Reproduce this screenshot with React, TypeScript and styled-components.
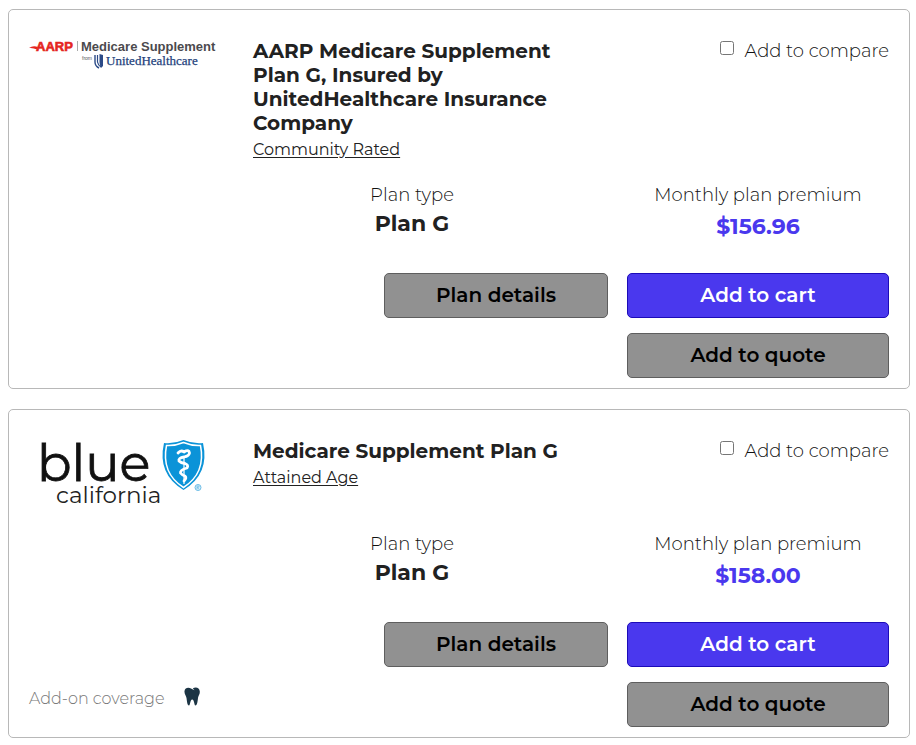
import React from "react";
import styled, { createGlobalStyle } from "styled-components";

const GlobalStyle = createGlobalStyle`
  *, *::before, *::after { box-sizing: border-box; }
  body {
    margin: 0;
    background: #fff;
    color: #212121;
    font-family: Montserrat, Inter, "Open Sans", sans-serif;
    font-size: 18px;
    line-height: 24px;
  }
`;

const PlanList = styled.main`
  display: flex;
  flex-direction: column;
  gap: 20px;
  padding: 9px 6px 7px 8px;
`;

const Card = styled.article`
  display: flex;
  flex-direction: column;
  padding: 29px 20px 10px;
  border: 1px solid #b8b8b8;
  border-radius: 5px;
`;

const Header = styled.header`
  display: grid;
  grid-template-columns: 188px minmax(0, 320px) 1fr;
  align-items: start;
  column-gap: 36px;
  min-height: 72px;
`;

const Title = styled.h2`
  margin: 0 0 3px;
  font-size: 20px;
  font-weight: 700;
  line-height: 24px;
`;

const RatingLink = styled.a`
  display: block;
  width: fit-content;
  color: inherit;
  font-size: 16px;
  text-underline-offset: 2px;
`;

const Compare = styled.label`
  display: flex;
  justify-content: flex-end;
  gap: 11px;
  color: #111;
  font-weight: 300;
  white-space: nowrap;
`;

const Checkbox = styled.input`
  width: 14px;
  height: 14px;
  margin: 2px 0 0;
`;

const Facts = styled.dl`
  display: grid;
  grid-template-columns: 1fr 262px;
  column-gap: 19px;
  margin: 21px 0 0 187px;
  min-height: 90px;
  text-align: center;
`;

const FactLabel = styled.dt`
  color: #111;
  font-weight: 300;
`;

const FactValue = styled.dd<{ $price?: boolean }>`
  margin: ${(p) => (p.$price ? 8 : 5)}px 0 0;
  color: ${(p) => (p.$price ? "#4a38ee" : "inherit")};
  font-size: 22px;
  font-weight: 700;
`;

const Footer = styled.footer`
  display: grid;
  grid-template-columns: 1fr 224px 262px;
  column-gap: 19px;
  align-items: start;
`;

const AddOn = styled.div`
  display: flex;
  align-self: end;
  gap: 18px;
  margin-bottom: 16px;
  color: #777;
  font-size: 16px;
  font-weight: 300;
`;

const Actions = styled.div`
  display: grid;
  gap: 15px;
  grid-column: 3;
`;

const Button = styled.button<{ $primary?: boolean }>`
  height: 45px;
  padding: 0 12px 2px;
  border: 1px solid ${(p) => (p.$primary ? "#1c0bb8" : "#5e5e5e")};
  border-radius: 5px;
  background: ${(p) => (p.$primary ? "#4a38ee" : "#919191")};
  color: ${(p) => (p.$primary ? "#fff" : "#000")};
  font-family: inherit;
  font-size: 20px;
  font-weight: 600;
  cursor: pointer;
`;

const DetailsButton = styled(Button)`
  grid-column: 2;
`;

const LogoArt = styled.svg`
  display: block;
  width: 188px;
  height: 72px;
  overflow: visible;
`;

const ToothArt = styled.svg`
  display: block;
  width: 18px;
  height: 19px;
`;

const AarpLogo = () => (
  <LogoArt viewBox="0 0 188 72" role="img" aria-label="AARP Medicare Supplement from UnitedHealthcare">
    <path d="M0 9 Q4 6 9 8 L8 10.500 Q4 8.500 0 9Z" fill="#e52520" />
    <text x="7" y="12" fontFamily="Liberation Sans" fontSize="13" fontWeight="700" fill="#e52520" stroke="#e52520" strokeWidth=".6">AARP</text>
    <path d="M48.500 2V12" stroke="#aaa" strokeWidth="1" />
    <text x="52" y="12" fontFamily="Liberation Sans" fontSize="13" fontWeight="700" fill="#4b4a4d">Medicare Supplement</text>
    <text x="53" y="21" fontFamily="Liberation Sans" fontSize="5" fill="#555">from</text>
    <path d="M66 16V23Q66 27 70 29" fill="none" stroke="#2b4a87" strokeWidth="1.4" />
    <path d="M68.500 16V23Q69 26 72 28" fill="none" stroke="#2b4a87" strokeWidth="1.2" />
    <path d="M70.500 15L74 16V27L72 29Q70.500 26 70.500 23Z" fill="#2b4a87" />
    <text x="77" y="26" fontFamily="Liberation Serif" fontSize="13" fill="#233f7c" stroke="#233f7c" strokeWidth=".25">UnitedHealthcare</text>
  </LogoArt>
);

const BlueLogo = () => (
  <LogoArt viewBox="0 0 188 72" role="img" aria-label="Blue Shield of California">
    <text x="8" y="42" fontFamily="Montserrat, Lato" fontSize="51" fill="#111" stroke="#111" strokeWidth=".8">blue</text>
    <text x="27" y="64" fontFamily="Montserrat, Lato" fontSize="23" fill="#222">california</text>
    <path d="M135 4 Q145 5 154.500 1 Q164 5 174 4 Q181 35 154.500 51 Q128 35 135 4Z" fill="#0b93d8" />
    <path d="M137.500 6.500 Q146 7 154.500 3.500 Q163 7 171.500 6.500 Q177 34 154.500 48.500 Q132 34 137.500 6.500Z" fill="none" stroke="#fff" strokeWidth="1.500" />
    <path d="M149 14 Q152 10.500 155 13 Q160 10 160.500 14 Q160 17 155 18 Q149 19 150 22 Q152 24 156 24.500 Q160 26 158 29 Q151 31 151.500 34 Q153 36 156 37 Q158 39 155 42" fill="none" stroke="#fff" strokeWidth="2.800" strokeLinecap="round" strokeLinejoin="round" />
    <path d="M155 17V45" stroke="#fff" strokeWidth="1.200" />
    <circle cx="169" cy="48.500" r="3" fill="#d6edf8" stroke="#6dbde7" strokeWidth="1" />
    <path d="M168 50V47H170Q171 48.500 168 48.500L170 50" fill="none" stroke="#6dbde7" strokeWidth=".7" />
  </LogoArt>
);

const ToothIcon = () => (
  <ToothArt viewBox="0 0 18 19" role="img" aria-label="Dental">
    <path d="M1.500 4 C2 0 6 .2 8 1.400 L11.500 3.300 L9.800 1.200 C13 -.2 16.500 .5 16.800 4.500 C17 7.500 15.300 8.500 15 11 C14.600 15 14 18.500 12.400 18.500 C11 18.500 11.500 12.500 9.200 12.500 C7 12.500 7.400 18.500 6 18.500 C4.200 18.500 4 14 3.500 11 C3.200 8.500 1.200 7.200 1.500 4Z" fill="#1b3444" />
  </ToothArt>
);

type Plan = {
  id: string;
  logo: React.ReactNode;
  title: string;
  rating: string;
  type: string;
  premium: string;
  dental?: boolean;
};

const plans: Plan[] = [
  {
    id: "aarp",
    logo: <AarpLogo />,
    title: "AARP Medicare Supplement Plan G, Insured by UnitedHealthcare Insurance Company",
    rating: "Community Rated",
    type: "Plan G",
    premium: "$156.96",
  },
  {
    id: "blue",
    logo: <BlueLogo />,
    title: "Medicare Supplement Plan G",
    rating: "Attained Age",
    type: "Plan G",
    premium: "$158.00",
    dental: true,
  },
];

const PlanCard = ({ plan }: { plan: Plan }) => (
  <Card>
    <Header>
      {plan.logo}
      <div>
        <Title>{plan.title}</Title>
        <RatingLink href="#rating">{plan.rating}</RatingLink>
      </div>
      <Compare htmlFor={`compare-${plan.id}`}>
        <Checkbox type="checkbox" id={`compare-${plan.id}`} />
        Add to compare
      </Compare>
    </Header>
    <Facts>
      <div>
        <FactLabel>Plan type</FactLabel>
        <FactValue>{plan.type}</FactValue>
      </div>
      <div>
        <FactLabel>Monthly plan premium</FactLabel>
        <FactValue $price>{plan.premium}</FactValue>
      </div>
    </Facts>
    <Footer>
      {plan.dental && (
        <AddOn>
          Add-on coverage
          <ToothIcon />
        </AddOn>
      )}
      <DetailsButton type="button">Plan details</DetailsButton>
      <Actions>
        <Button type="button" $primary>Add to cart</Button>
        <Button type="button">Add to quote</Button>
      </Actions>
    </Footer>
  </Card>
);

export default function App() {
  return (
    <>
      <GlobalStyle />
      <PlanList>
        {plans.map((plan) => (
          <PlanCard key={plan.id} plan={plan} />
        ))}
      </PlanList>
    </>
  );
}
